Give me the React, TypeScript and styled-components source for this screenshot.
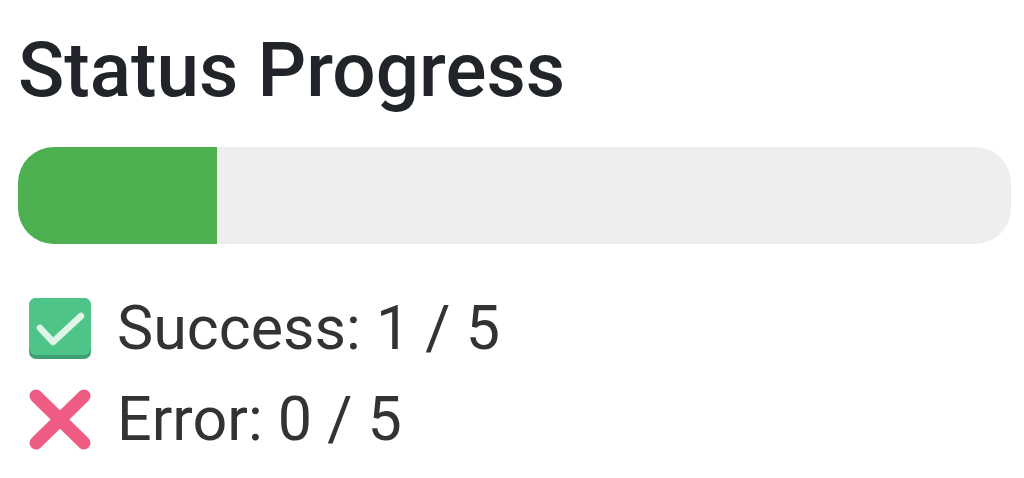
import React from "react";
import styled, { createGlobalStyle } from "styled-components";

const GlobalStyle = createGlobalStyle`
  html, body {
    margin: 0;
    background: #fff;
    font-family: Roboto, "Liberation Sans", sans-serif;
  }
`;

const Container = styled.div`
  width: 1024px;
  height: 478px;
  box-sizing: border-box;
  padding: 26px 13px 0 18px;
  overflow: hidden;
`;

const Title = styled.h2`
  margin: 0 0 33px;
  font-size: 76.5px;
  line-height: 88px;
  font-weight: 500;
  color: #212529;
`;

const Track = styled.div`
  height: 97px;
  border-radius: 36px;
  background: #eeeeee;
  overflow: hidden;
  margin-bottom: 54px;
`;

const Fill = styled.div`
  height: 100%;
  background: #4caf50;
`;

const StatusList = styled.div`
  display: flex;
  flex-direction: column;
  gap: 29px;
  padding-left: 11px;
`;

const StatusRow = styled.div`
  display: flex;
  align-items: center;
  gap: 26px;
  height: 62px;
  font-size: 61px;
  color: #333;
`;

const Label = styled.span`
  padding-bottom: 2px;
`;

const CheckIcon = () => (
  <svg width="62" height="62" viewBox="0 0 62 62">
    <rect x="0" y="0" width="62" height="61" rx="7" fill="#3f9f75" />
    <rect x="0" y="0" width="62" height="57" rx="7" fill="#4fc488" />
    <path d="M11 30l13 14 28-26" fill="none" stroke="#dff5e8" strokeWidth="6.5" strokeLinecap="round" strokeLinejoin="round" />
  </svg>
);

const CrossIcon = () => (
  <svg width="62" height="62" viewBox="0 0 62 62">
    <path d="M7 7l48 47M55 7L7 54" fill="none" stroke="#ef5c83" strokeWidth="13" strokeLinecap="round" />
  </svg>
);

export default function App() {
  return (
    <Container>
      <GlobalStyle />
      <Title>Status Progress</Title>
      <Track>
        <Fill style={{ width: `${(1 / 5) * 100}%` }} />
      </Track>
      <StatusList>
        <StatusRow>
          <CheckIcon />
          <Label>Success: 1 / 5</Label>
        </StatusRow>
        <StatusRow>
          <CrossIcon />
          <Label>Error: 0 / 5</Label>
        </StatusRow>
      </StatusList>
    </Container>
  );
}
